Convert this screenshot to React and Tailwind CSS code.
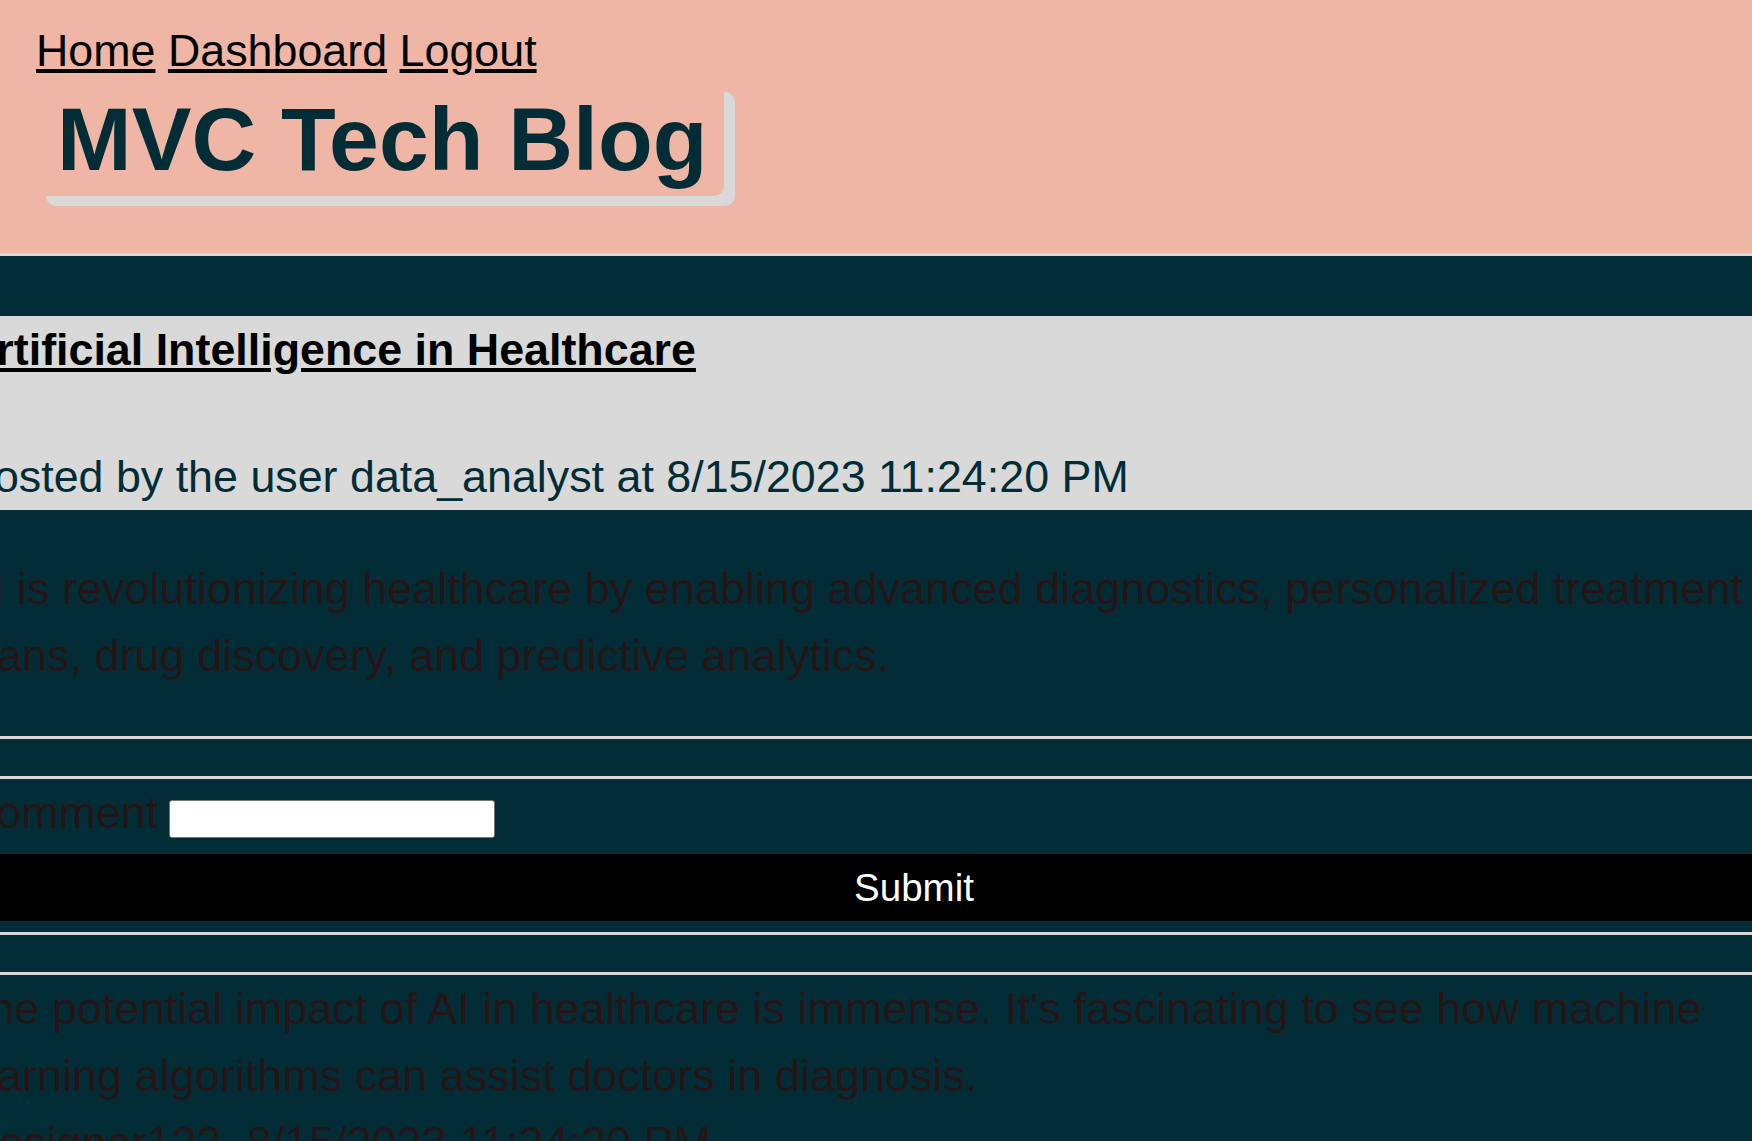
import React from 'react';

export default function App() {
  return (
    <div className="w-full min-h-screen overflow-hidden bg-[#032d36] font-['Liberation_Sans',Arial,sans-serif]">
      <header className="h-[256px] bg-[#efb6a5] border-b-[3px] border-[#d9d9d9] px-[36px]">
        <nav className="pt-[24px] text-[44.8px] leading-[52px] text-black">
          <a href="#" className="underline">Home</a>{' '}
          <a href="#" className="underline">Dashboard</a>{' '}
          <a href="#" className="underline">Logout</a>
        </nav>
        <div className="inline-block mt-[6px] -ml-px pl-[22px] pr-[17px] py-[7px] rounded-[10px] shadow-[11px_10px_0_0_#d9d9d9]">
          <h1 className="text-[89.6px] leading-[100px] font-bold text-[#032d36]">MVC Tech Blog</h1>
        </div>
      </header>

      <main className="w-[1900px] -ml-[36px] pt-[60px]">
        <section className="bg-[#d9d9d9]">
          <h2 className="text-[44.8px] leading-[67.2px] font-bold text-black">
            <a href="#" className="underline">Artificial Intelligence in Healthcare</a>
          </h2>
          <p className="mt-[60px] text-[44.8px] leading-[67.2px] text-[#032d36]">
            Posted by the user data_analyst at 8/15/2023 11:24:20 PM
          </p>
        </section>

        <p className="mt-[44.6px] -ml-[2px] text-[45px] leading-[67.2px] text-[#251516]">
          AI is revolutionizing healthcare by enabling advanced diagnostics, personalized treatment plans, drug discovery, and predictive analytics.
        </p>

        <div className="mt-[46.6px] h-[3px] bg-[#d9d9d9]" />
        <div className="mt-[37px] h-[3px] bg-[#d9d9d9]" />

        <form className="flex items-start" onSubmit={(e) => e.preventDefault()}>
          <label className="text-[44.8px] leading-[67.2px] text-[#251516]">Comment</label>
          <input type="text" className="ml-[11px] mt-[21px] h-[38px] w-[326px] bg-white border border-[#767676] rounded-[3px]" />
        </form>
        <button type="button" className="block mt-[7.8px] w-full h-[67px] bg-black text-white text-[38.5px] leading-[64px] text-center">
          Submit
        </button>

        <div className="mt-[11px] h-[3px] bg-[#d9d9d9]" />
        <div className="mt-[37px] h-[3px] bg-[#d9d9d9]" />

        <div className="text-[45px] leading-[67.2px] text-[#251516]">
          <p className="-ml-[2px]">
            The potential impact of AI in healthcare is immense. It's fascinating to see how machine learning algorithms can assist doctors in diagnosis.
          </p>
          <p className="ml-[10px]">designer123, 8/15/2023 11:24:20 PM</p>
        </div>
      </main>
    </div>
  );
}
